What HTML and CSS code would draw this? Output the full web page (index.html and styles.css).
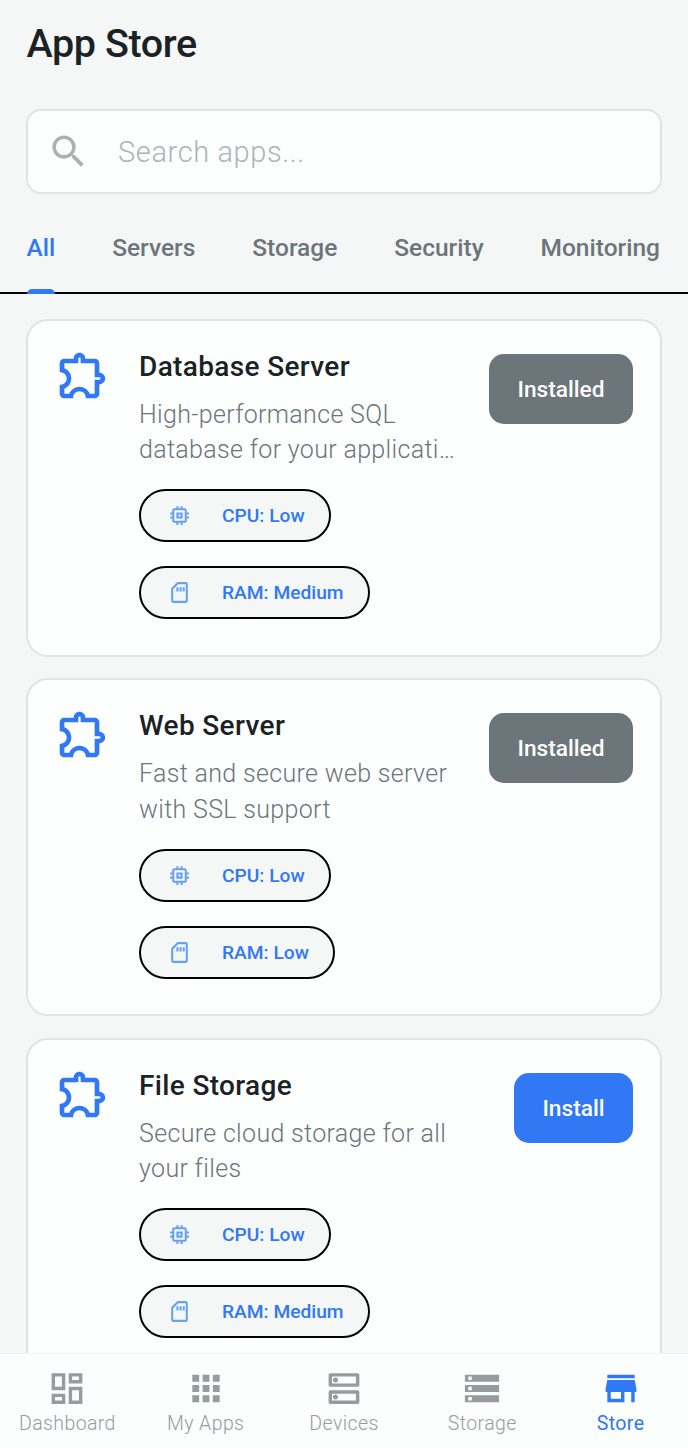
FILE: index.html
```html
<!DOCTYPE html>
<html lang="en">
<head>
<meta charset="utf-8">
<title>App Store</title>
<link rel="stylesheet" href="styles.css">
</head>
<body>
<svg class="sprite" aria-hidden="true">
  <symbol id="puzzle" viewBox="0 0 24 24"><path d="M10.5 4.5c.28 0 .5.22.5.5v2h6v6h2c.28 0 .5.22.5.5s-.22.5-.5.5h-2v6h-2.12c-.68-1.75-2.39-3-4.38-3s-3.7 1.25-4.38 3H4v-2.120c1.750-.68 3-2.390 3-4.380 0-1.990-1.240-3.700-2.990-4.380L4 7h6V5c0-.28.22-.5.5-.5m0-2C9.120 2.500 8 3.620 8 5H4c-1.100 0-1.990.9-1.990 2v3.800h.29c1.490 0 2.700 1.210 2.700 2.700s-1.210 2.700-2.700 2.700H2V20c0 1.100.9 2 2 2h3.800v-.3c0-1.490 1.210-2.700 2.700-2.700s2.700 1.210 2.700 2.700v.3H17c1.100 0 2-.9 2-2v-4c1.380 0 2.500-1.120 2.500-2.500S20.380 11 19 11V7c0-1.100-.9-2-2-2h-4c0-1.380-1.120-2.500-2.500-2.500z"/></symbol>
  <symbol id="cpu" viewBox="0 0 24 24"><path d="M15 9H9v6h6V9zm-2 4h-2v-2h2v2zm8-2V9h-2V7c0-1.100-.9-2-2-2h-2V3h-2v2h-2V3H9v2H7c-1.100 0-2 .9-2 2v2H3v2h2v2H3v2h2v2c0 1.100.9 2 2 2h2v2h2v-2h2v2h2v-2h2c1.100 0 2-.9 2-2v-2h2v-2h-2v-2h2zm-4 6H7V7h10v10z"/></symbol>
  <symbol id="ram" viewBox="0 0 24 24"><path d="M18 2h-8L4 8v12c0 1.100.9 2 2 2h12c1.100 0 2-.9 2-2V4c0-1.100-.9-2-2-2zm0 18H6V8.830L10.830 4H18v16zM9 7h2v4H9zm3 0h2v4h-2zm3 0h2v4h-2z"/></symbol>
</svg>
<div class="screen">
  <header class="header">
    <h1 class="title">App Store</h1>
    <div class="search">
      <svg class="search-icon" viewBox="0 0 24 24"><path d="M15.500 14h-.79l-.28-.27C15.410 12.590 16 11.110 16 9.500 16 5.910 13.090 3 9.500 3S3 5.910 3 9.500 5.910 16 9.500 16c1.610 0 3.090-.59 4.230-1.570l.27.28v.79l5 4.990L20.490 19l-4.990-5zm-6 0C7.010 14 5 11.990 5 9.500S7.010 5 9.500 5 14 7.010 14 9.500 11.990 14 9.500 14z"/></svg>
      <span class="placeholder">Search apps...</span>
    </div>
  </header>
  <nav class="tabs">
    <a class="tab active">All</a>
    <a class="tab">Servers</a>
    <a class="tab">Storage</a>
    <a class="tab">Security</a>
    <a class="tab">Monitoring</a>
  </nav>
  <main class="list">
    <article class="card">
      <svg class="app-icon"><use href="#puzzle"/></svg>
      <div class="info">
        <h2 class="name">Database Server</h2>
        <p class="desc">High-performance SQL<br>database for your applicati…</p>
        <div class="chips">
          <div class="chip"><svg class="chip-icon"><use href="#cpu"/></svg><span>CPU: Low</span></div>
          <div class="chip"><svg class="chip-icon"><use href="#ram"/></svg><span>RAM: Medium</span></div>
        </div>
      </div>
      <button class="button installed">Installed</button>
    </article>
    <article class="card">
      <svg class="app-icon"><use href="#puzzle"/></svg>
      <div class="info">
        <h2 class="name">Web Server</h2>
        <p class="desc">Fast and secure web server<br>with SSL support</p>
        <div class="chips">
          <div class="chip"><svg class="chip-icon"><use href="#cpu"/></svg><span>CPU: Low</span></div>
          <div class="chip"><svg class="chip-icon"><use href="#ram"/></svg><span>RAM: Low</span></div>
        </div>
      </div>
      <button class="button installed">Installed</button>
    </article>
    <article class="card">
      <svg class="app-icon"><use href="#puzzle"/></svg>
      <div class="info">
        <h2 class="name">File Storage</h2>
        <p class="desc">Secure cloud storage for all<br>your files</p>
        <div class="chips">
          <div class="chip"><svg class="chip-icon"><use href="#cpu"/></svg><span>CPU: Low</span></div>
          <div class="chip"><svg class="chip-icon"><use href="#ram"/></svg><span>RAM: Medium</span></div>
        </div>
      </div>
      <button class="button">Install</button>
    </article>
  </main>
  <nav class="bottom">
    <a class="item"><svg class="nav-icon" viewBox="0 0 24 24"><path d="M19 5v2h-4V5h4M9 5v6H5V5h4m10 8v6h-4v-6h4M9 17v2H5v-2h4M21 3h-8v6h8V3zM11 3H3v10h8V3zm10 8h-8v10h8V11zm-10 4H3v6h8v-6z"/></svg><span>Dashboard</span></a>
    <a class="item"><svg class="nav-icon" viewBox="0 0 24 24"><path d="M4 8h4V4H4v4zm6 12h4v-4h-4v4zm-6 0h4v-4H4v4zm0-6h4v-4H4v4zm6 0h4v-4h-4v4zm6-10v4h4V4h-4zm-6 4h4V4h-4v4zm6 6h4v-4h-4v4zm0 6h4v-4h-4v4z"/></svg><span>My Apps</span></a>
    <a class="item"><svg class="nav-icon" viewBox="0 0 24 24"><path d="M19 15v4H5v-4h14m1-2H4c-.55 0-1 .45-1 1v6c0 .55.45 1 1 1h16c.55 0 1-.45 1-1v-6c0-.55-.45-1-1-1zM7 18.500c-.82 0-1.500-.67-1.500-1.500s.68-1.500 1.500-1.500 1.500.67 1.500 1.500-.67 1.500-1.500 1.500zM19 5v4H5V5h14m1-2H4c-.55 0-1 .45-1 1v6c0 .55.45 1 1 1h16c.55 0 1-.45 1-1V4c0-.55-.45-1-1-1zM7 8.500c-.82 0-1.500-.67-1.500-1.500S6.180 5.500 7 5.500s1.500.68 1.500 1.500S7.830 8.500 7 8.500z"/></svg><span>Devices</span></a>
    <a class="item"><svg class="nav-icon" viewBox="0 0 24 24"><path d="M2 20h20v-4H2v4zm2-3h2v2H4v-2zM2 4v4h20V4H2zm4 3H4V5h2v2zm-4 7h20v-4H2v4zm2-3h2v2H4v-2z"/></svg><span>Storage</span></a>
    <a class="item current"><svg class="nav-icon" viewBox="0 0 24 24"><path d="M20 4H4v2h16V4zm1 10v-2l-1-5H4l-1 5v2h1v6h10v-6h4v6h2v-6h1zm-9 4H6v-4h6v4z"/></svg><span>Store</span></a>
  </nav>
</div>
</body>
</html>
```

FILE: styles.css
```css
* { box-sizing: border-box; }
body {
  margin: 0;
  background: #f5f7f7;
  color: #1b2225;
  font-family: Roboto, "Liberation Sans", sans-serif;
}
h1, h2, p { margin: 0; }
svg { display: block; fill: currentColor; flex: none; }
.sprite { position: absolute; width: 0; height: 0; }
.screen {
  height: 1448px;
  display: flex;
  flex-direction: column;
  overflow: hidden;
}
.header { padding: 20px 26px 0; }
.title {
  padding-left: 0.5px;
  font-size: 39.5px;
  line-height: 48px;
  font-weight: 500;
  letter-spacing: -0.4px;
}
.search {
  display: flex;
  align-items: center;
  height: 85px;
  margin-top: 41px;
  padding-left: 19px;
  background: #fdfefe;
  border: 2px solid #dfe4e5;
  border-radius: 15px;
}
.search-icon { width: 43px; height: 43px; color: #a9b1b5; }
.placeholder {
  margin-left: 28px;
  font-size: 29px;
  font-weight: 300;
  letter-spacing: 0.6px;
  color: #abb4b8;
}
.tabs {
  display: flex;
  justify-content: space-between;
  height: 100px;
  padding: 39px 28px 0 26.500px;
  border-bottom: 2px solid #000;
  flex: none;
}
.tab {
  position: relative;
  font-size: 24.5px;
  line-height: 30px;
  font-weight: 500;
  color: #6b757a;
}
.active { color: #3078f4; }
.active::after {
  content: "";
  position: absolute;
  left: 0;
  right: 0;
  bottom: -2px;
  height: 5px;
  border-radius: 5px 5px 0 0;
  background: #3078f4;
}
.list {
  flex: 1;
  min-height: 0;
  overflow: hidden;
  display: flex;
  flex-direction: column;
  gap: 21.5px;
  padding: 24.500px 26px 0;
}
.card {
  flex: none;
  display: flex;
  align-items: flex-start;
  height: 338px;
  padding: 26px 27px 0 26.500px;
  background: #fdfefe;
  border: 2px solid #dfe4e5;
  border-radius: 22px;
}
.app-icon { width: 56px; height: 56px; color: #3078f4; }
.info { flex: 1; margin-left: 28.500px; padding-top: 3px; white-space: nowrap; }
.name {
  font-size: 28px;
  line-height: 33px;
  font-weight: 500;
  letter-spacing: 0.35px;
}
.desc {
  margin-top: 14px;
  font-size: 25px;
  line-height: 35.5px;
  font-weight: 300;
  letter-spacing: 0.33px;
  color: #6b757a;
}
.chips {
  display: flex;
  flex-direction: column;
  align-items: flex-start;
  gap: 24px;
  margin-top: 21.5px;
}
.chip {
  display: flex;
  align-items: center;
  height: 53px;
  padding: 0 24px 0 26px;
  border: 2px solid #000;
  border-radius: 27px;
  background: #f5f7f7;
  color: #3078f4;
  font-size: 19.2px;
  font-weight: 500;
}
.chip-icon { width: 25px; height: 25px; color: #65a3ee; }
.chip span { margin-left: 30px; }
.button {
  height: 70px;
  margin-top: 7px;
  padding: 1px 28.500px 0;
  border: 0;
  border-radius: 15px;
  background: #3078f4;
  color: #fdfefe;
  font: 500 22.700px Roboto, sans-serif;
}
.installed { background: #6b757a; }
.bottom {
  flex: none;
  display: grid;
  grid-template-columns: repeat(5, 138.300px);
  justify-content: center;
  height: 95px;
  padding-top: 14px;
  background: #fcfdfd;
  border-top: 1px solid #f1f3f3;
}
.item {
  display: flex;
  flex-direction: column;
  align-items: center;
  gap: 3px;
  color: #949c9f;
  font-size: 19.5px;
  line-height: 24px;
  font-weight: 300;
  letter-spacing: 0.4px;
}
.nav-icon { width: 42px; height: 41px; }
.current { color: #3078f4; font-weight: 400; }
```
